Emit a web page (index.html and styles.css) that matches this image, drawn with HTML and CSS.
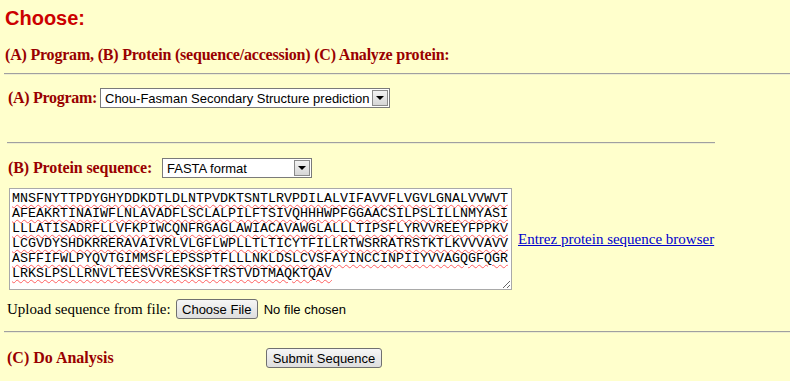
FILE: index.html
```html
<!DOCTYPE html>
<html lang="en">
<head>
    <meta charset="UTF-8">
    <title>Protein Analysis</title>
    <link rel="stylesheet" href="styles.css">
</head>
<body>
    <h2 class="title">Choose:</h2>
    <h4 class="steps">(A) Program, (B) Protein (sequence/accession) (C) Analyze protein:</h4>
    <hr class="rule">

    <form class="form">
        <!-- Program choice -->
        <div class="row row-program">
            <span class="label label-a">(A) Program:</span>
            <span class="pick pick-program">
                <select>
                    <option>Chou-Fasman Secondary Structure prediction</option>
                </select>
                <span class="arrow"></span>
            </span>
        </div>

        <hr class="rule rule-short">

        <!-- Sequence -->
        <div class="row row-format">
            <span class="label label-b">(B) Protein sequence:</span>
            <span class="pick pick-format">
                <select>
                    <option>FASTA format</option>
                </select>
                <span class="arrow"></span>
            </span>
        </div>

        <div class="row row-seq">
            <textarea class="seq" spellcheck="false">MNSFNYTTPDYGHYDDKDTLDLNTPVDKTSNTLRVPDILALVIFAVVFLVGVLGNALVVWVT
AFEAKRTINAIWFLNLAVADFLSCLALPILFTSIVQHHHWPFGGAACSILPSLILLNMYASI
LLLATISADRFLLVFKPIWCQNFRGAGLAWIACAVAWGLALLLTIPSFLYRVVREEYFPPKV
LCGVDYSHDKRRERAVAIVRLVLGFLWPLLTLTICYTFILLRTWSRRATRSTKTLKVVVAVV
ASFFIFWLPYQVTGIMMSFLEPSSPTFLLLNKLDSLCVSFAYINCCINPIIYVVAGQGFQGR
LRKSLPSLLRNVLTEESVVRESKSFTRSTVDTMAQKTQAV</textarea>
            <a class="entrez" href="#">Entrez protein sequence browser</a>
        </div>

        <div class="row row-upload">
            <span class="plain">Upload sequence from file:</span>
            <button type="button" class="btn btn-file">Choose File</button>
            <span class="nofile">No file chosen</span>
        </div>
    </form>

    <hr class="rule rule-last">

    <div class="row row-submit">
        <span class="label label-c">(C) Do Analysis</span>
        <button type="button" class="btn btn-submit">Submit Sequence</button>
    </div>
</body>
</html>
```

FILE: styles.css
```css
body {
    margin: 0;
    padding: 0 0 0 4px;
    background: #ffffcc;
    font-family: "Liberation Serif", "Times New Roman", serif;
    font-size: 16px;
    color: #000;
}

.title {
    margin: 7px 0 0 1px;
    font: bold 20px/23px "Liberation Sans", Arial, sans-serif;
    color: #cc0000;
}

.steps {
    margin: 16px 0 0 1px;
    font-size: 16px;
    line-height: 18px;
    font-weight: bold;
    letter-spacing: -0.2px;
    color: #990000;
}

.rule {
    margin: 9px 0 0;
    border: 0;
    border-top: 1px solid #a0a0a0;
    border-bottom: 1px solid #eeeecc;
    height: 0;
}

.rule-short {
    width: 708px;
    margin: 34px 0 0 3px;
}

.rule-last {
    margin-top: 12px;
}

.form {
    margin: 0;
}

.row {
    display: flex;
    align-items: center;
}

.label {
    font-weight: bold;
    color: #990000;
    white-space: nowrap;
}

.label-a {
    width: 92px;
    letter-spacing: -0.3px;
}

.label-b {
    width: 154px;
    letter-spacing: -0.1px;
}

.label-c {
    width: 259px;
}

.row-program {
    margin: 13px 0 0 4px;
}

.row-format {
    margin: 14px 0 0 4px;
}

/* select look-alike */
.pick {
    position: relative;
    display: inline-block;
    height: 20px;
}

.pick select {
    appearance: none;
    -webkit-appearance: none;
    box-sizing: border-box;
    height: 20px;
    margin: 0;
    padding: 0 18px 0 4px;
    border: 1px solid #7a7a7a;
    border-radius: 0;
    background: #fff;
    font: 13px "Liberation Sans", Arial, sans-serif;
    color: #000;
    outline: none;
}

.pick-program select {
    width: 290px;
}

.pick-format select {
    width: 150px;
}

.arrow {
    position: absolute;
    top: 2px;
    right: 2px;
    width: 14px;
    height: 14px;
    border: 1px solid #8a8a8a;
    background: linear-gradient(#f2f2f2, #d6d6d6);
    pointer-events: none;
}

.arrow::after {
    content: "";
    position: absolute;
    left: 3px;
    top: 5px;
    border-left: 4px solid transparent;
    border-right: 4px solid transparent;
    border-top: 4px solid #000;
}

.row-seq {
    margin: 10px 0 0 5px;
}

.seq {
    box-sizing: border-box;
    width: 503px;
    height: 102px;
    margin: 0;
    padding: 2px 2px;
    border: 1px solid #a9a9a9;
    background: #fff;
    font: 13.33px/15px "Liberation Mono", "Courier New", monospace;
    color: #000;
    text-decoration: underline wavy #ff6060;
    text-decoration-thickness: 1px;
    text-underline-offset: 2px;
    white-space: pre;
    overflow: hidden;
    resize: both;
}

.entrez {
    margin-left: 6px;
    font-size: 15px;
    color: #0000cc;
}

.row-upload {
    margin: 9px 0 0 3px;
}

.plain {
    font-size: 15px;
}

.btn {
    box-sizing: border-box;
    height: 20px;
    padding: 0;
    border: 1px solid #707070;
    border-radius: 3px;
    background: linear-gradient(#f6f6f6, #dedede);
    font: 13px "Liberation Sans", Arial, sans-serif;
    color: #000;
    white-space: nowrap;
}

.btn-file {
    width: 82px;
    margin-left: 5px;
}

.nofile {
    margin-left: 6px;
    font: 13px "Liberation Sans", Arial, sans-serif;
}

.row-submit {
    margin: 15px 0 0 3px;
}

.btn-submit {
    width: 116px;
}
```
